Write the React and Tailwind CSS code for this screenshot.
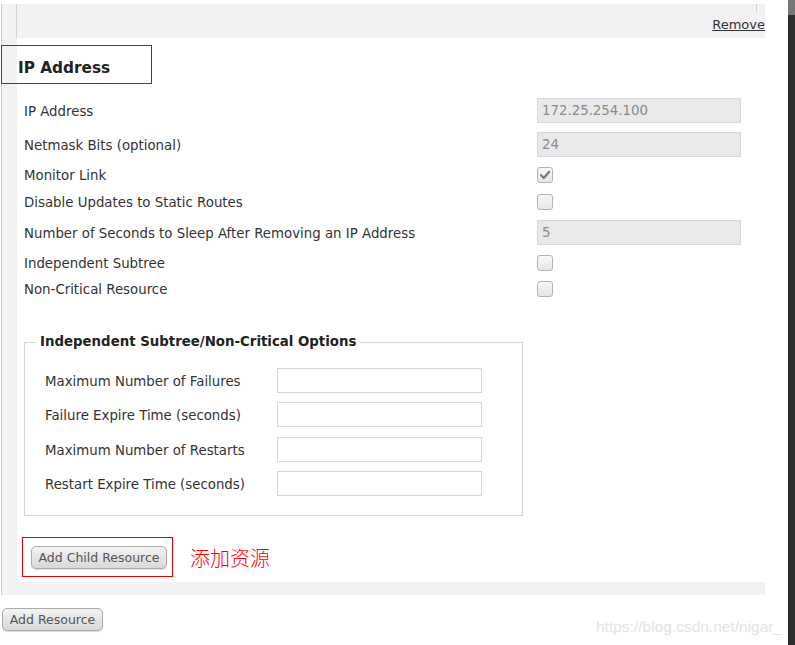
import React from 'react'

const ROWS = [
  { label: 'IP Address', type: 'text', value: '172.25.254.100', mt: 'mt-0' },
  { label: 'Netmask Bits (optional)', type: 'text', value: '24', mt: 'mt-[9px]' },
  { label: 'Monitor Link', type: 'check', checked: true, mt: 'mt-[10px]' },
  { label: 'Disable Updates to Static Routes', type: 'check', mt: 'mt-[11px]' },
  { label: 'Number of Seconds to Sleep After Removing an IP Address', type: 'text', value: '5', mt: 'mt-[10px]' },
  { label: 'Independent Subtree', type: 'check', mt: 'mt-[10px]' },
  { label: 'Non-Critical Resource', type: 'check', mt: 'mt-[10px]' },
]

const OPTIONS = [
  { label: 'Maximum Number of Failures', mt: 'mt-0' },
  { label: 'Failure Expire Time (seconds)', mt: 'mt-[9px]' },
  { label: 'Maximum Number of Restarts', mt: 'mt-[10px]' },
  { label: 'Restart Expire Time (seconds)', mt: 'mt-[9px]' },
]

function Checkbox({ checked }) {
  return (
    <span className="flex h-[16px] w-[16px] items-center justify-center rounded-[3px] border border-[#b4b4b4] bg-gradient-to-b from-[#f7f7f7] to-[#e6e6e6]">
      {checked && (
        <svg width="12" height="12" viewBox="0 0 12 12">
          <path d="M2 6.2 L4.8 9 L10.2 2.8" fill="none" stroke="#7a7a7a" strokeWidth="2.2" strokeLinecap="round" strokeLinejoin="round" />
        </svg>
      )}
    </span>
  )
}

function Button({ children, className = '' }) {
  return (
    <button className={`h-[23px] rounded-[5px] border border-[#ababab] bg-gradient-to-b from-[#f4f4f4] to-[#d8d8d8] pt-px text-[12.5px] leading-none text-[#555] shadow-[0_1px_1px_rgba(0,0,0,0.15)] ${className}`}>
      {children}
    </button>
  )
}

export default function App() {
  return (
    <div className="relative flex h-[645px] w-[795px] overflow-hidden bg-white font-['DejaVu_Sans',sans-serif] text-[13.33px] text-[#333]">
      <div className="w-[788px]">
        {/* resource block */}
        <div className="ml-px mt-[4px] w-[764px] border-l border-[#cfcfcf] bg-[#f2f2f2] pb-[13px] pl-[14px]">
          <div className="relative flex h-[34px] items-end justify-end border-l border-[#d2d2d2] pb-[5px]">
            <span className="absolute right-[8px] top-0 h-[8px] w-px bg-[#cfcfcf]" />
            <a href="#" className="text-[13px] leading-[16px] text-[#333] underline">Remove</a>
          </div>

          <div className="relative ml-px bg-white pb-[13px]">
            <h2 className="pl-px pt-[20px] text-[15.3px] font-bold leading-[20px] text-[#222]">IP Address</h2>

            <div className="mt-[20px] pl-[7px]">
              {ROWS.map((r) => (
                <div key={r.label} className={`flex items-center ${r.mt} ${r.type === 'text' ? 'h-[25px]' : 'h-[16px]'}`}>
                  <span className="w-[513px] pt-[2px] leading-[16px]">{r.label}</span>
                  {r.type === 'text' ? (
                    <div className="flex h-[25px] w-[204px] items-center border border-[#d3d9de] bg-[#e9e9e9] px-[4px] pt-px text-[#8a8a8a]">
                      {r.value}
                    </div>
                  ) : (
                    <Checkbox checked={r.checked} />
                  )}
                </div>
              ))}
            </div>

            <fieldset className="ml-[7px] mt-[37px] w-[499px] border border-[#d0d5d9] pb-[19px] pt-[18px]">
              <legend className="ml-[11px] px-[4px] font-bold leading-[16px] text-[#222]">
                Independent Subtree/Non-Critical Options
              </legend>
              <div className="pl-[20px]">
                {OPTIONS.map((o) => (
                  <div key={o.label} className={`flex h-[25px] items-center ${o.mt}`}>
                    <span className="w-[232px] pt-[2px] leading-[16px]">{o.label}</span>
                    <div className="h-[25px] w-[205px] border border-[#d3d7da] bg-white" />
                  </div>
                ))}
              </div>
            </fieldset>

            <div className="ml-[14px] mt-[30px] flex items-center">
              <Button className="w-[136px]">Add Child Resource</Button>
              <span className="ml-[23px] font-['Noto_Sans_CJK_SC',sans-serif] text-[20px] font-light leading-none text-[#ff0000]">
                添加资源
              </span>
            </div>

            <div className="absolute left-[5px] top-[499px] h-[40px] w-[151px] border border-[#e00000]" />
          </div>
        </div>

        <Button className="ml-[2px] mt-[13px] w-[101px]">Add Resource</Button>
      </div>

      {/* scrollbar */}
      <div className="flex w-[7px] flex-col">
        <div className="h-[15px] bg-[#777]" />
        <div className="flex-1 bg-[#2e2e2e]" />
      </div>

      {/* annotation on heading */}
      <div className="absolute left-px top-[45px] h-[39px] w-[151px] border border-[#e00000]" />

      <span className="absolute left-[596px] top-[617px] font-['Liberation_Sans',sans-serif] text-[15.5px] leading-[20px] text-[#e3e3e3]">
        https://blog.csdn.net/nigar_
      </span>
    </div>
  )
}
